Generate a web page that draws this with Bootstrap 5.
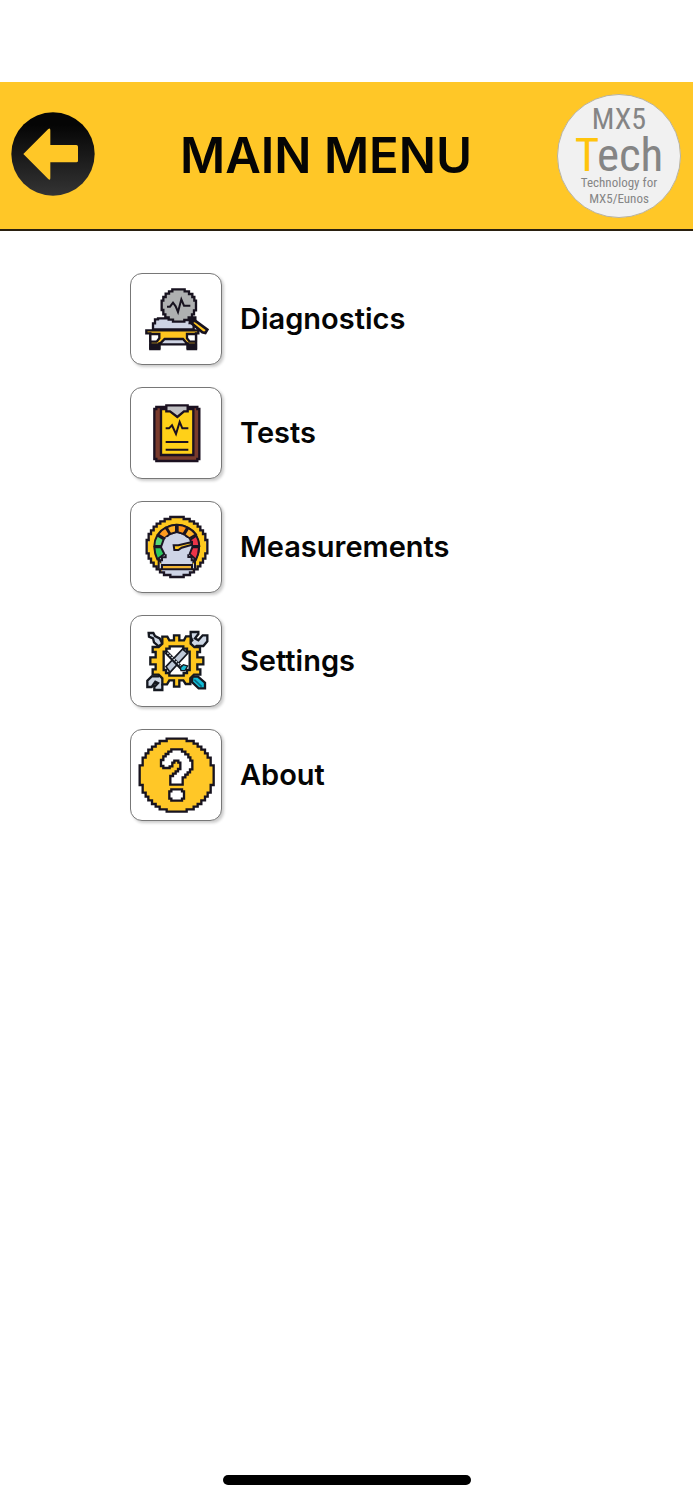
<!DOCTYPE html>
<html lang="en">
<head>
<meta charset="utf-8">
<meta name="viewport" content="width=device-width, initial-scale=1">
<title>Main menu</title>
<link href="https://cdn.jsdelivr.net/npm/bootstrap@5.3.0/dist/css/bootstrap.min.css" rel="stylesheet">
<style>
body { font-family: Inter, "Liberation Sans", sans-serif; color: #050505; background: #fff; }
.status-space { height: 82px; }
.top-bar { background: #ffc727; border-bottom: 2px solid #2a2010; height: 149px; padding: 0 12px 0 11px; }
.back-btn { width: 84px; height: 84px; margin-top: -4px; }
.back-btn svg, .tile svg { display: block; width: 100%; height: 100%; }
.page-title { font-size: 49px; font-weight: 600; line-height: 60px; }
.brand-disc { width: 124px; height: 124px; background: #f1f1f1; border: 1px solid #b9b39f; color: #858585; font-family: "Roboto Condensed", "Liberation Sans Narrow", "Liberation Sans", sans-serif; padding-top: 8px; }
.brand-top { font-size: 30px; line-height: 32px; }
.brand-main { font-size: 47px; line-height: 39px; }
.brand-main span { color: #ffc40c; }
.brand-sub { font-size: 13px; line-height: 16px; padding-top: 1px; }
.menu-list { padding: 42px 0 0 130px; gap: 22px; }
.menu-item { gap: 18px; color: #050505; font-size: 29px; font-weight: 600; line-height: 36px; }
.tile { width: 92px; height: 92px; border: 1px solid #777; border-radius: 12px; background: #fff; box-shadow: 2px 2px 3px #0003; }
.home-bar { width: 248px; height: 10px; background: #000; margin-bottom: 15px; }
</style>
</head>
<body class="min-vh-100 d-flex flex-column">
<div class="status-space"></div>
<header class="top-bar d-flex align-items-center justify-content-between">
  <button type="button" class="back-btn btn p-0 border-0 rounded-circle" aria-label="Back">
    <svg viewBox="0 0 252 252"><defs><linearGradient id="disc" x2="0" y2="1"><stop offset=".15" stop-color="#050505"/><stop offset="1" stop-color="#343434"/></linearGradient></defs><circle cx="126" cy="126" r="125" fill="url(#disc)"/><path d="M37 126L111 52Q118 46 118 55V99H196Q201 99 201 104V146Q201 151 196 151H118V198Q118 207 111 200Z" fill="#ffc727"/></svg>
  </button>
  <h1 class="page-title mb-0">MAIN MENU</h1>
  <div class="brand-disc rounded-circle text-center">
    <div class="brand-top">MX5</div>
    <div class="brand-main"><span>T</span>ech</div>
    <div class="brand-sub">Technology for<br>MX5/Eunos</div>
  </div>
</header>
<main class="flex-grow-1">
<nav class="menu-list d-flex flex-column align-items-start" aria-label="Main menu">
  <a href="#diagnostics" class="menu-item d-flex align-items-center text-decoration-none">
    <span class="tile"><svg viewBox="18 18 270 270" fill="none" stroke="#17121f" stroke-width="7">
      <path d="M84 184V166H90V154H99V151H197V160H206V184Z" fill="#ced4e4"/>
      <path d="M206 155L247 185L241 195L232 193L200 166Z" fill="#ffc51f" stroke-width="8"/>
      <path d="M196 148H211V159H201V165H194Z" fill="#17121f"/>
      <path d="M64 187H220V196H213V240H188V226H103V240H76V196H64Z" fill="#ffc51f"/>
      <path d="M76 198H103V211L95 221H76ZM213 198H186V211L194 221H213Z" fill="#fff"/>
      <path d="M103 229L119 213H174L188 229Z" fill="#ced4e4"/><path d="M76 229H103V243H76ZM188 229H213V243H188Z" fill="#17121f"/>
      <path d="M142 64H179V70H192V78H202V87H208V98H213V127H207V139H201V148H191V156H178V161H144V155H131V148H121V139H115V126H110V98H115V87H122V77H132V70H142Z" fill="#aeb0b1"/>
      <path d="M126 116H135L144 104L152 115L159 132L169 94L177 113H196" stroke-width="6"/>
    </svg></span><span>Diagnostics</span></a>
  <a href="#tests" class="menu-item d-flex align-items-center text-decoration-none">
    <span class="tile"><svg viewBox="18 18 270 270" fill="none" stroke="#1b1020" stroke-width="7">
      <path d="M94 75H217V81H223V231H217V237H94V231H88V81H94Z" fill="#793b2d"/>
      <path d="M108 81H205V219H108Z" fill="#ffd018"/>
      <path d="M124 70H188V88H177L157 105L135 88H124Z" fill="#c0c0c3"/>
      <path d="M122 139H132L141 130L153 156L164 120L172 139H190M122 180H190M122 203H190" stroke-width="6"/>
    </svg></span><span>Tests</span></a>
  <a href="#measurements" class="menu-item d-flex align-items-center text-decoration-none">
    <span class="tile"><svg viewBox="18 18 270 270" fill="none" stroke="#1b1523" stroke-width="6">
      <circle cx="156" cy="153" r="88" fill="#ffc91e" stroke="none"/>
      <circle cx="156" cy="153" r="66" fill="#ced4e6"/>
      <path d="M97 190L118 174L108 154H88Q89 174 97 190Z" fill="#2cc65e"/><path d="M88 150H109L116 130L97 118Q88 133 88 150Z" fill="#59d578"/>
      <path d="M99 115L119 127L134 115L122 95Q108 102 99 115Z" fill="#ff9b20"/><path d="M125 94L136 114L153 109V86Q138 86 125 94Z" fill="#ffb12a"/>
      <path d="M158 86V109L175 114L187 94Q174 86 158 86Z" fill="#ff9318"/><path d="M190 96L178 116L193 127L213 115Q203 102 190 96Z" fill="#ffb12a"/>
      <path d="M214 119L196 131L202 150H223Q222 132 214 119ZM222 154H202L194 174L213 191Q221 176 222 154Z" fill="#ed3448"/>
      <path d="M144 114H168V119H179V126H190V173H178V182H189V191H202V204H214V218H203V234H180V243H132V234H110V219H99V203H109V192H123V183H134V174H122V124H133V119H144Z" fill="#ced4e6" stroke="none"/>
      <path d="M146 148H160L201 138V146L170 155L160 162H148Z" fill="#ffc91e"/>
      <path d="M122 175V184H111V193H101V218M190 175V183H200V193H210V218"/>
      <path d="M111 207H201V220H111Z" fill="#f2b533"/>
      <path d="M136 63H176V69H194V76H207V83H218V92H226V103H234V114H241V132H247V172H241V188H234V200H226V211H218V220H207V229H195V237H176V243H136V237H117V229H105V220H95V211H86V200H78V188H71V172H65V132H71V114H78V103H86V92H95V83H106V76H119V69H136Z" stroke-width="7"/>
    </svg></span><span>Measurements</span></a>
  <a href="#settings" class="menu-item d-flex align-items-center text-decoration-none">
    <span class="tile"><svg viewBox="18 18 270 270" fill="none" stroke="#151820" stroke-width="7">
      <path d="M71 69H85L90 78L104 85L112 101L101 109L87 97L84 85L72 80Z" fill="#cdd7e5"/>
      <path d="M197 66H220V72L210 85L220 91L233 76H247V94L235 108H215L201 120L185 106L202 91L197 81Z" fill="#cdd7e5"/>
      <path d="M110 190L127 211L112 224V240H88V231L99 219L91 215L80 231H67V212L80 199H100Z" fill="#cdd7e5"/>
      <path d="M202 200H219L240 218V235H221L201 216Z" fill="#12bdd8"/><path d="M208 209L230 230" stroke="#056b84" stroke-width="5"/>
      <path d="M147 76H163V91H177L183 79H197V101L208 111H225V126H217V142H235V163H217V178H226V194H207L196 205V222H182L175 211H163V230H147V211H133L126 223H112V205L101 194H83V178H92V163H76V142H92V126H83V111H101L112 101V80H127L133 91H147Z" fill="#ffc71e"/>
      <path d="M134 109H175V116H186V125H194V180H186V189H176V197H133V189H123V180H116V125H124V116H134Z" fill="#fff"/>
      <path d="M123 170L173 117L188 130L135 187Z" fill="#bec9d8" stroke-width="5"/><path d="M123 126L171 176" stroke-width="12"/><path d="M127 128L167 168" stroke="#dce4eb" stroke-width="4" stroke-dasharray="5 4"/>
      <path d="M166 173L175 164L188 168L180 182H168Z" fill="#17bad2" stroke-width="4"/>
    </svg></span><span>Settings</span></a>
  <a href="#about" class="menu-item d-flex align-items-center text-decoration-none">
    <span class="tile"><svg viewBox="18 18 270 270" fill="none" stroke="#17131f" stroke-width="7">
      <path d="M125 44H185V51H206V59H218V68H229V77H240V88H248V101H257V124H266V183H257V206H248V218H240V229H229V240H218V248H206V256H185V263H125V256H104V248H92V240H81V229H70V218H62V206H53V183H44V124H53V101H62V88H70V77H81V68H92V59H104V51H125Z" fill="#ffc727"/>
      <path d="M139 76H171V83H181V91H190V100H196V110H202V136H195V145H188V152H181V160H173V182H136V156H144V149H152V142H159V135H166V116H160V110H148V116H142V127H134V132H115V126H108V108H115V97H122V90H130V83H139Z" fill="#fff"/>
      <path d="M139 196H171V202H177V224H171V230H139V224H133V202H139Z" fill="#fff"/>
    </svg></span><span>About</span></a>
</nav>
</main>
<div class="home-bar rounded-pill mx-auto"></div>
<script src="https://cdn.jsdelivr.net/npm/bootstrap@5.3.0/dist/js/bootstrap.bundle.min.js"></script>
</body>
</html>
